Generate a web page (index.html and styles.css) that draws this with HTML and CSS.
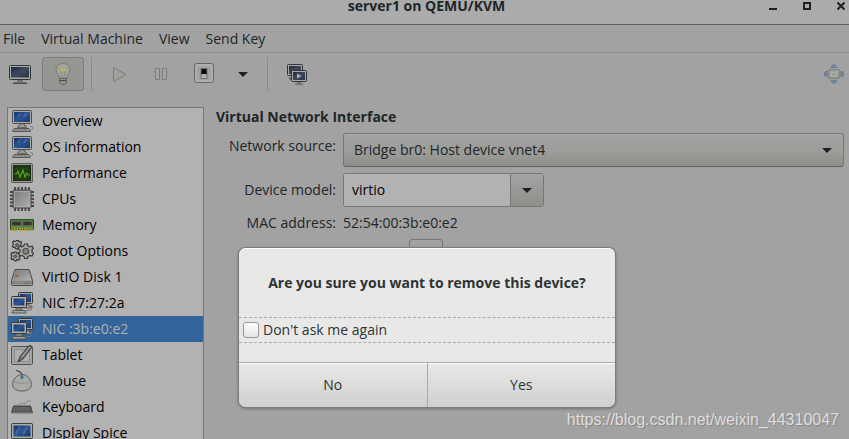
FILE: index.html
```html
<!DOCTYPE html>
<html lang="en">
<head>
    <meta charset="UTF-8">
    <meta name="viewport" content="width=device-width, initial-scale=1.0">
    <title>server1 on QEMU/KVM</title>
    <link rel="stylesheet" href="styles.css">
</head>
<body>
    <!-- shared icon shapes -->
    <svg class="defs" aria-hidden="true">
        <defs>
            <linearGradient id="screen" x1="0" y1="0" x2="1" y2="1">
                <stop offset="0" stop-color="#15356c"/>
                <stop offset=".5" stop-color="#2c5592"/>
                <stop offset="1" stop-color="#173870"/>
            </linearGradient>
            <linearGradient id="slate" x1="0" y1="0" x2="1" y2="1">
                <stop offset="0" stop-color="#1f2a3a"/>
                <stop offset=".5" stop-color="#3c4a5e"/>
                <stop offset="1" stop-color="#273345"/>
            </linearGradient>
            <linearGradient id="metal" x1="0" y1="0" x2="1" y2="1">
                <stop offset="0" stop-color="#777"/>
                <stop offset="1" stop-color="#b2b2b2"/>
            </linearGradient>
            <symbol id="computer" viewBox="0 0 24 24">
                <rect x="2.500" y="1.500" width="19" height="13" rx="1" fill="#a9aaa6" stroke="#4c4d4a"/>
                <rect x="4" y="3" width="16" height="10" fill="url(#screen)"/>
                <path d="M7 8l3-4h1.500l-2.500 4zM13 8l3-4h1.500l-2.500 4z" fill="#6f91bd" opacity=".45"/>
                <path d="M9.500 15h5v2h2v1.500h-9V17h2z" fill="#9c9d99" stroke="#5a5b57" stroke-width=".8"/>
                <path d="M4 19.500h15l1.500 3h-18z" fill="#a6a6a2" stroke="#4c4d4a" stroke-width=".9"/>
                <path d="M5 20.700h13M4.500 21.900h14" stroke="#62635f" stroke-dasharray="1.500 .7" stroke-width=".7"/>
                <path d="M20 17.500l2.500.5v2l-1.500 1" fill="none" stroke="#777" stroke-width=".8"/>
            </symbol>
            <symbol id="network" viewBox="0 0 24 24">
                <rect x="8.500" y="1.500" width="14" height="11" rx="1" fill="#a9aaa6" stroke="#343533"/>
                <rect x="10" y="3" width="11" height="8" fill="url(#screen)"/>
                <path d="M15 13h4v2h3v2h-7z" fill="#a0a19d" stroke="#4c4d4a" stroke-width=".8"/>
                <rect x="1.500" y="5.500" width="15" height="11" rx="1" fill="#b0b1ad" stroke="#343533"/>
                <rect x="3.500" y="7.500" width="11" height="7" fill="url(#screen)"/>
                <path d="M6 17h6v2H6z" fill="#9c9d99" stroke="#4c4d4a" stroke-width=".7"/>
                <path d="M3 19.500h12l1 2.500H2z" fill="#a6a6a2" stroke="#4c4d4a" stroke-width=".9"/>
                <path d="M16 20c3-2 4 1 6-2" fill="none" stroke="#777"/>
            </symbol>
            <symbol id="performance" viewBox="0 0 24 24">
                <rect x="1.500" y="2.500" width="21" height="19" rx="1.500" fill="#999a96" stroke="#5a5b57"/>
                <rect x="3.500" y="4.500" width="17" height="15" fill="#173a0d" stroke="#222c1d"/>
                <path d="M4 8h16M4 12h16M4 16h16M8 5v14M12 5v14M16 5v14" stroke="#28551a" stroke-width=".6"/>
                <path d="M4.500 13h2l1.500-3 2 6 3-7 2 7 2-4 1 2h2" fill="none" stroke="#5b9c2b" stroke-width="1.200"/>
            </symbol>
            <symbol id="cpu" viewBox="0 0 24 24">
                <path d="M12 0v24M8.500 0v24M5 0v24M15.500 0v24M19 0v24M0 12h24M0 8.500h24M0 5h24M0 15.500h24M0 19h24" stroke="#464744" stroke-width="1.900"/>
                <rect x="3" y="3" width="18" height="18" rx="1" fill="url(#metal)" stroke="#4b4c49"/>
                <rect x="4.500" y="4.500" width="15" height="15" fill="none" stroke="#a9a9a9" stroke-width=".8"/>
            </symbol>
            <symbol id="memory" viewBox="0 0 24 24">
                <path d="M.5 6.500h23v10H.5z" fill="#4e7838" stroke="#2f5420"/>
                <path d="M2 8.500h9v4H2zM13 8.500h9v4h-9z" fill="#343533" stroke="#62635f" stroke-width=".8"/>
                <path d="M1 14h22" stroke="#6e9a4f"/>
                <path d="M1.500 16.500h21" stroke="#b09b30" stroke-width="3" stroke-dasharray="1.600 .9"/>
            </symbol>
            <symbol id="gears" viewBox="0 0 24 24">
                <g fill="#a6a7a3" stroke="#343532" stroke-width="1.100">
                    <path d="M6.500 1.500h2l.5 1.500 2-.5.5 2-1 1.500 1 1.500-1 1.500-2-.5-1 1.500-2-.5-.5-1.500-2 .5-.5-2 1-1.500-1-1.500 1-1.500 2 .5z"/>
                    <path d="M4.500 13h2l.5 1.500 2-.5 1 2-1 1.500 1 1.500-1 2-2-.5-1 1.500-2-.5-.5-1.500-2 .5-.5-2 1-1.500-1-1.500 1-2 2 .5z"/>
                    <path d="M14.500 5h3l.5 2 2 1 2-1 1.500 2.500-1.500 1.500v2l1.500 1.500-1.500 2.500-2-.5-2 1-.5 2h-3l-.5-2-2-1-2 .5-1.500-2.500 1.500-1.500v-2L8 9.500 9.500 7l2 1 2-1z"/>
                </g>
                <g fill="#81827e" stroke="#41423f">
                    <circle cx="7" cy="6" r="1.300"/>
                    <circle cx="5.300" cy="17.300" r="1.300"/>
                    <circle cx="15.800" cy="12.300" r="3"/>
                </g>
            </symbol>
            <symbol id="disk" viewBox="0 0 24 24">
                <path d="M5 4.500h14l3.500 11v4q0 1-1 1h-19q-1 0-1-1v-4z" fill="#9a9b97" stroke="#484946"/>
                <path d="M5.700 5.500h12.600l3 9.500H2.700z" fill="url(#metal)"/>
                <path d="M2 16h20v3H2z" fill="#858682"/>
                <path d="M14 18h6" stroke="#5a5b57" stroke-dasharray="1 1"/>
                <rect x="5" y="10" width="3.500" height="2" fill="#bf5a18"/>
            </symbol>
            <symbol id="tablet" viewBox="0 0 24 24">
                <rect x="1.500" y="3.500" width="21" height="18" rx="1" fill="#a4a5a1" stroke="#51524f"/>
                <rect x="4.500" y="6.500" width="15" height="12" fill="#aeaeae" stroke="#8b8c88"/>
                <path d="M21 2.500l1 1.500-9 12-5 3 2-5.500 9-11z" fill="#71726e" stroke="#333431" stroke-width=".9"/>
                <path d="M20 4l-8 10" stroke="#b0b0b0"/>
            </symbol>
            <symbol id="mouse" viewBox="0 0 24 24">
                <path d="M6 1c1 2 5 0 6 5" fill="none" stroke="#4c4d4a" stroke-width="1.200"/>
                <path d="M12 5.500c5 0 9.500 5 9.500 10 0 4-4 6.500-9.500 6.500s-9.500-2.500-9.500-6.500c0-5 4.500-10 9.500-10z" fill="#a9aaa6" stroke="#60615d"/>
                <path d="M4 12c3 3 13 3 16 0" fill="none" stroke="#858682" stroke-width=".8"/>
                <ellipse cx="12" cy="8" rx="1.500" ry="2.300" fill="#436f9f"/>
            </symbol>
            <symbol id="keyboard" viewBox="0 0 24 24">
                <path d="M9 10c1-4 7 1 8-4h4" fill="none" stroke="#858682"/>
                <path d="M3.500 11h17l2 6.500h-21z" fill="#555653" stroke="#41423f"/>
                <path d="M4 13h16M3.500 15h17" stroke="#858682" stroke-width=".9" stroke-dasharray="1.500 .8"/>
                <path d="M1.500 18h21" stroke="#858682" stroke-width="1.500"/>
            </symbol>
            <symbol id="display" viewBox="0 0 24 24">
                <rect x="1.500" y="2.500" width="21" height="15" rx="1" fill="#a9aaa6" stroke="#41423f"/>
                <rect x="3.500" y="4.500" width="17" height="11" fill="url(#screen)"/>
                <path d="M5 12l4-6h2l-5 8zM12 13l4-7h2l-4 8z" fill="#6f91bd" opacity=".4"/>
                <path d="M9 18h6v2h3v2H6v-2h3z" fill="#9c9d99" stroke="#5a5b57"/>
            </symbol>
        </defs>
    </svg>

    <div class="window">
        <header class="titlebar">
            <h1 class="title">server1 on QEMU/KVM</h1>
            <div class="window-buttons">
                <button class="window-button" aria-label="Minimize"><svg viewBox="0 0 8 8"><path d="M0 7h8" stroke="#1e2224" stroke-width="2"/></svg></button>
                <button class="window-button" aria-label="Maximize"><svg viewBox="0 0 8 8"><path d="M1 1h6v6H1z" fill="none" stroke="#1e2224" stroke-width="2"/></svg></button>
                <button class="window-button" aria-label="Close"><svg viewBox="0 0 8 8"><path d="M.5.5l7 7M7.500.5l-7 7" stroke="#1e2224" stroke-width="2"/></svg></button>
            </div>
        </header>

        <nav class="menubar">
            <button class="menu">File</button>
            <button class="menu">Virtual Machine</button>
            <button class="menu">View</button>
            <button class="menu">Send Key</button>
        </nav>

        <div class="toolbar">
            <button class="tool console" aria-label="Console">
                <svg viewBox="0 0 24 24"><rect x="1.500" y="3.500" width="21" height="14" rx="1" fill="#a9aaa6" stroke="#343533"/><rect x="3" y="5" width="18" height="10.500" fill="url(#slate)"/><path d="M9 18h6v2H9z" fill="#74756f"/><path d="M5 20.500h14v1.500H5z" fill="#484946"/></svg>
            </button>
            <button class="tool details active" aria-label="Details">
                <svg viewBox="0 0 24 24"><path d="M8.500 16c0-3-3.500-4-3.500-8.500 0-4 3-6 7-6s7 2 7 6c0 4.500-3.500 5.500-3.500 8.500z" fill="#a2a39e" stroke="#777873" stroke-width=".9"/><path d="M9 7.500c2-2 4-2 6 0l-2 1.500h-2z" fill="#b6af65" stroke="#bdb55b"/><path d="M10 9l1 6M14 9l-1 6" stroke="#82837e" stroke-width=".7"/><path d="M8.500 16.500h7v4l-2 2h-3l-2-2z" fill="#92938e" stroke="#60615d" stroke-width=".9"/><path d="M9 18.500h6" stroke="#484946"/></svg>
            </button>
            <span class="separator"></span>
            <button class="tool run" aria-label="Run">
                <svg viewBox="0 0 24 24"><path d="M6.500 5.500v14l12.500-7z" fill="#a0a19c" stroke="#7c7d78"/></svg>
            </button>
            <button class="tool pause" aria-label="Pause">
                <svg viewBox="0 0 24 24"><path d="M6.500 6.500h4v11h-4zM13.500 6.500h4v11h-4z" fill="#a6a7a2" stroke="#7c7d78"/></svg>
            </button>
            <button class="tool shutdown" aria-label="Shut down">
                <svg viewBox="0 0 24 24"><rect x="2.500" y="1.500" width="19" height="19" rx="2" fill="#a2a2a1" stroke="#666763"/><rect x="4" y="3" width="16" height="16" rx="1" fill="none" stroke="#b8b8b8"/><path d="M8.500 6h7v11h-7z" fill="#6c6c6c"/><path d="M9.500 7h5v5h-5z" fill="#0c0c0c"/><path d="M10 12h4l1 4H9z" fill="#b0b0b0"/></svg>
            </button>
            <button class="tool more" aria-label="Shut down options"><span class="arrow"></span></button>
            <span class="separator"></span>
            <button class="tool snapshots" aria-label="Snapshots">
                <svg viewBox="0 0 24 24"><rect x="2.500" y="2.500" width="15" height="11" rx="1" fill="#a9aaa6" stroke="#343533"/><rect x="4" y="4" width="12" height="8" fill="url(#slate)"/><path d="M4 16.500h5" stroke="#60615d" stroke-width="2"/><rect x="6.500" y="8.500" width="15" height="11" rx="1" fill="#a9aaa6" stroke="#343533"/><rect x="8" y="10" width="12" height="8" fill="url(#slate)"/><path d="M12 11.500v5l4.500-2.500z" fill="#b0b0b0"/><path d="M12 20h4v1.500h2V23h-8v-1.500h2z" fill="#74756f"/></svg>
            </button>
            <button class="tool fullscreen" aria-label="Fullscreen">
                <svg viewBox="0 0 24 24"><g fill="#75869f" stroke="#607087" stroke-width=".8"><path d="M9 5c0-4 6-4 6 0zM9 19c0 4 6 4 6 0zM4.500 9c-4 0-4 6 0 6zM19.500 9c4 0 4 6 0 6z"/></g><rect x="6.500" y="7.500" width="11" height="9" fill="#a0a19c" stroke="#72736e"/><path d="M8.500 10.500h7v4h-7zM14 8.500h2" fill="none" stroke="#b0b0ac"/></svg>
            </button>
        </div>

        <main class="content">
            <ul class="hardware">
                <li class="item"><svg class="icon"><use href="#computer"/></svg>Overview</li>
                <li class="item"><svg class="icon"><use href="#computer"/></svg>OS information</li>
                <li class="item"><svg class="icon"><use href="#performance"/></svg>Performance</li>
                <li class="item"><svg class="icon"><use href="#cpu"/></svg>CPUs</li>
                <li class="item"><svg class="icon"><use href="#memory"/></svg>Memory</li>
                <li class="item"><svg class="icon"><use href="#gears"/></svg>Boot Options</li>
                <li class="item"><svg class="icon"><use href="#disk"/></svg>VirtIO Disk 1</li>
                <li class="item"><svg class="icon"><use href="#network"/></svg>NIC :f7:27:2a</li>
                <li class="item selected"><svg class="icon"><use href="#network"/></svg>NIC :3b:e0:e2</li>
                <li class="item"><svg class="icon"><use href="#tablet"/></svg>Tablet</li>
                <li class="item"><svg class="icon"><use href="#mouse"/></svg>Mouse</li>
                <li class="item"><svg class="icon"><use href="#keyboard"/></svg>Keyboard</li>
                <li class="item"><svg class="icon"><use href="#display"/></svg>Display Spice</li>
            </ul>

            <section class="panel">
                <h2 class="heading">Virtual Network Interface</h2>
                <div class="form">
                    <label class="label source-label" for="source">Network source:</label>
                    <div class="dropdown">
                        <select class="source" id="source">
                            <option>Bridge br0: Host device vnet4</option>
                        </select>
                        <span class="arrow"></span>
                    </div>

                    <label class="label" for="model">Device model:</label>
                    <div class="combo">
                        <input class="model" id="model" type="text" value="virtio">
                        <button class="combo-button" aria-label="Show models"><span class="arrow"></span></button>
                    </div>

                    <span class="label">MAC address:</span>
                    <span class="mac">52:54:00:3b:e0:e2</span>

                    <button class="link-button" aria-label="Link state"></button>
                </div>
            </section>
        </main>
    </div>

    <div class="dialog" role="dialog" aria-labelledby="question">
        <h2 class="question" id="question">Are you sure you want to remove this device?</h2>
        <label class="check-row"><input class="check" type="checkbox">Don't ask me again</label>
        <div class="actions">
            <button class="action">No</button>
            <button class="action">Yes</button>
        </div>
    </div>

    <span class="watermark">https://blog.csdn.net/weixin_44310047</span>
</body>
</html>
```
FILE: styles.css
```css
:root {
    --bg: #a2a2a2;
    --base: #b2b2b2;
    --text: #202628;
    --border: #777875;
    --selected: #33659a;
}

* {
    box-sizing: border-box;
}

body {
    position: relative;
    height: 100vh;
    margin: 0;
    overflow: hidden;
    background-color: var(--bg);
    color: var(--text);
    font-family: "Open Sans", "Noto Sans", sans-serif;
    font-size: 14px;
    line-height: 20px;
}

button,
input,
select {
    margin: 0;
    padding: 0;
    border: none;
    background: none;
    color: inherit;
    font: inherit;
}

.defs {
    position: absolute;
    width: 0;
    height: 0;
}

.window {
    display: flex;
    flex-direction: column;
    height: 100%;
}

.titlebar {
    display: grid;
    grid-template-columns: 1fr auto 1fr;
    height: 25px;
    border-bottom: 1px solid #5f5f5d;
    background-color: #ababab;
}

.title {
    grid-column: 2;
    margin: 0;
    padding-left: 4px;
    font-size: 14px;
    line-height: 12px;
}

.window-buttons {
    display: flex;
    justify-content: flex-end;
    gap: 26px;
    padding: 2px 4px 0 0;
}

.window-button {
    width: 8px;
    height: 8px;
}

.window-button svg {
    display: block;
    width: 8px;
    height: 8px;
}

.menubar {
    display: flex;
    gap: 16px;
    height: 28px;
    padding: 0 3px;
    border-bottom: 1px solid #8d8d8b;
}

.toolbar {
    display: flex;
    align-items: center;
    height: 42px;
    padding: 0 3px 0 4px;
}

.tool {
    display: flex;
    align-items: center;
    justify-content: center;
    width: 32px;
    height: 34px;
    border: 1px solid transparent;
    border-radius: 3px;
}

.tool svg {
    width: 24px;
    height: 24px;
}

.details {
    width: 42px;
    margin-left: 6px;
}

.active {
    border-color: #7d7e7a;
    background-color: #969692;
}

.separator {
    width: 1px;
    height: 34px;
    margin: 0 7px;
    background-color: #8a8a87;
}

.run,
.pause,
.shutdown,
.snapshots {
    width: 43px;
}

.run {
    width: 40px;
}

.more {
    width: 35px;
}

.fullscreen {
    margin-left: auto;
    width: 24px;
}

.arrow {
    width: 0;
    height: 0;
    border: 5px solid transparent;
    border-top-color: #1b2022;
    border-bottom: none;
    pointer-events: none;
}

.content {
    display: flex;
    flex: 1;
    gap: 12px;
    min-height: 0;
    padding: 12px 5px 0 7px;
}

.hardware {
    flex: none;
    width: 197px;
    margin: 0;
    padding: 0;
    overflow: hidden;
    border: 1px solid var(--border);
    border-bottom: none;
    background-color: var(--base);
    color: #000;
    list-style: none;
}

.item {
    display: flex;
    align-items: center;
    gap: 8px;
    height: 26px;
    padding-left: 2px;
}

.icon {
    flex: none;
    width: 24px;
    height: 24px;
}

.selected {
    background-color: var(--selected);
    color: #b2b2b2;
}

.panel {
    flex: 1;
}

.heading {
    margin: 0 0 6px;
    font-size: 14px;
    line-height: 20px;
}

.form {
    display: grid;
    grid-template-columns: 120px 1fr;
    gap: 6px 7px;
    align-items: center;
}

.label {
    text-align: right;
}

.source-label {
    padding-bottom: 8px;
}

.dropdown {
    display: flex;
    align-items: center;
    padding-right: 11px;
    border: 1px solid var(--border);
    border-bottom-color: #62625f;
    border-radius: 3px;
    background-image: linear-gradient(#a3a3a2, #9b9b98 60%, #8e8e8a);
    box-shadow: inset 0 1px #adadab;
}

.source {
    flex: 1;
    height: 32px;
    padding-left: 10px;
    appearance: none;
}

.combo {
    display: flex;
    width: 201px;
    height: 34px;
    border: 1px solid var(--border);
    border-radius: 3px;
}

.model {
    flex: 1;
    min-width: 0;
    padding-left: 8px;
    background-color: var(--base);
    color: #000;
}

.combo-button {
    display: flex;
    align-items: center;
    justify-content: center;
    width: 33px;
    border-left: 1px solid var(--border);
    background-image: linear-gradient(#a3a3a2, #8e8e8a);
}

.link-button {
    grid-column: 2;
    width: 34px;
    height: 34px;
    margin-left: 66px;
    border: 1px solid var(--border);
    border-radius: 3px;
}

.dialog {
    position: absolute;
    top: 248px;
    left: 239px;
    width: 376px;
    overflow: hidden;
    border-radius: 7px;
    background-color: #e8e8e7;
    box-shadow: inset 0 1px #fff, 0 0 0 1px #7c7c7c, 0 1px 3px 1px rgba(0, 0, 0, 0.3);
    color: #2e3436;
}

.question {
    margin: 0;
    padding: 25px 0 24px;
    font-size: 14px;
    line-height: 20px;
    text-align: center;
}

.check-row {
    display: flex;
    align-items: center;
    gap: 4px;
    height: 26px;
    margin-bottom: 19px;
    padding-left: 4px;
    border: 1px dashed #aaaaa8;
    border-width: 1px 0;
}

.check {
    width: 16px;
    height: 16px;
    border: 1px solid #969692;
    border-radius: 3px;
    background-image: linear-gradient(#fff, #e4e4e2);
    appearance: none;
}

.actions {
    display: flex;
    border-top: 1px solid #aaaaa8;
}

.action {
    flex: 1;
    height: 44px;
    background-image: linear-gradient(#e8e8e7, #d0d0ce);
    box-shadow: inset 0 1px #fff;
}

.action + .action {
    border-left: 1px solid #aaaaa8;
}

.watermark {
    position: absolute;
    right: 10px;
    bottom: 9px;
    color: #dedede;
    font-family: "Liberation Sans", Arial, sans-serif;
    font-size: 16px;
    text-shadow: 1px 1px 1px #858585;
}
```
